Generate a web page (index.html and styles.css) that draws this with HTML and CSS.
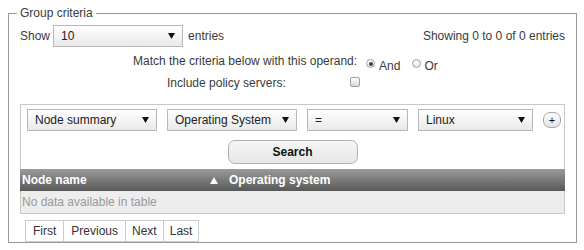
FILE: index.html
```html
<!DOCTYPE html>
<html>
<head>
<meta charset="utf-8">
<link rel="stylesheet" href="styles.css">
</head>
<body>
<fieldset class="group">
  <legend class="group-title">Group criteria</legend>
  <div class="top-row">
    <div class="length">
      <span>Show</span>
      <div class="select select-len"><span>10</span><svg class="arrow" width="7" height="6" viewBox="0 0 7 6"><path d="M0 0H7L3.5 6Z"/></svg></div>
      <span>entries</span>
    </div>
    <div class="info">Showing 0 to 0 of 0 entries</div>
  </div>
  <div class="options">
    <div class="opt-row operand">
      <span class="opt-label">Match the criteria below with this operand:</span>
      <span class="radio checked"></span><span class="radio-text and">And</span>
      <span class="radio second"></span><span class="radio-text or">Or</span>
    </div>
    <div class="opt-row policy">
      <span class="opt-label">Include policy servers:</span>
      <span class="checkbox"></span>
    </div>
  </div>
  <div class="criteria">
    <div class="line">
      <div class="select w130"><span>Node summary</span><svg class="arrow" width="7" height="6" viewBox="0 0 7 6"><path d="M0 0H7L3.5 6Z"/></svg></div>
      <div class="select w130"><span>Operating System</span><svg class="arrow" width="7" height="6" viewBox="0 0 7 6"><path d="M0 0H7L3.5 6Z"/></svg></div>
      <div class="select w101"><span>=</span><svg class="arrow" width="7" height="6" viewBox="0 0 7 6"><path d="M0 0H7L3.5 6Z"/></svg></div>
      <div class="select w115"><span>Linux</span><svg class="arrow" width="7" height="6" viewBox="0 0 7 6"><path d="M0 0H7L3.5 6Z"/></svg></div>
      <div class="plus">+</div>
    </div>
    <div class="search-wrap"><div class="search">Search</div></div>
  </div>
  <div class="table">
    <div class="thead">
      <div class="th">Node name</div>
      <div class="th sorted"><svg class="tri" width="8" height="7" viewBox="0 0 8 7"><path d="M4 0L8 7H0Z"/></svg><span>Operating system</span></div>
    </div>
    <div class="empty">No data available in table</div>
  </div>
  <div class="pager">
    <span class="pg">First</span><span class="pg">Previous</span><span class="pg">Next</span><span class="pg">Last</span>
  </div>
</fieldset>
</body>
</html>
```

FILE: styles.css
```css
html, body {
  margin: 0;
  padding: 0;
  background: #fff;
}
body {
  font-family: "Liberation Sans", Arial, sans-serif;
  font-size: 12px;
  color: #3a3a3a;
}
.group {
  margin: 6px 7px 0 8px;
  padding: 5px 11px 0 11px;
  border: 1px solid #9a9a9a;
  min-width: 0;
}
.group-title {
  margin-left: -3px;
  padding: 0 3px;
  line-height: 14px;
}
.top-row {
  display: flex;
  justify-content: space-between;
  align-items: center;
  height: 22px;
}
.length {
  display: flex;
  align-items: center;
}
.length .select-len {
  margin: 0 5px 0 3px;
  width: 130px;
}
.info {
  text-align: right;
}
.select {
  box-sizing: border-box;
  height: 22px;
  display: flex;
  align-items: center;
  justify-content: space-between;
  border: 1px solid #b8b8b8;
  background: linear-gradient(#ffffff, #e9e9e9);
  padding: 0 7px;
  color: #222;
  white-space: nowrap;
}
.arrow {
  fill: #111;
  flex: none;
}
.w130 { width: 130px; }
.w101 { width: 101px; }
.w115 { width: 115px; }
.options {
  margin-top: 7px;
  padding-left: 113px;
}
.opt-row {
  display: flex;
  align-items: flex-start;
  line-height: 14px;
}
.operand {
  height: 20px;
}
.policy {
  margin-top: 2px;
  padding-left: 34px;
  height: 14px;
}
.radio {
  box-sizing: border-box;
  width: 9px;
  height: 9px;
  border-radius: 50%;
  border: 1px solid #a5a5a5;
  background: radial-gradient(circle at 50% 35%, #ffffff, #dcdcdc);
  margin-top: 5px;
  margin-left: 9px;
  position: relative;
}
.radio.checked::after {
  content: "";
  position: absolute;
  left: 1.5px;
  top: 1.5px;
  width: 4px;
  height: 4px;
  border-radius: 50%;
  background: #444;
}
.radio.second {
  margin-left: 12px;
}
.radio-text {
  margin-top: 5px;
}
.radio-text.and { margin-left: 4px; }
.radio-text.or { margin-left: 3px; }
.checkbox {
  box-sizing: border-box;
  width: 10px;
  height: 10px;
  border: 1px solid #a0a0a0;
  border-radius: 2px;
  background: linear-gradient(#ffffff, #d8d8d8);
  margin-left: 64px;
  margin-top: 1px;
}
.criteria {
  margin-top: 14px;
  border: 1px solid #c8c8c8;
  border-bottom: none;
  padding: 4px 0 5px 6px;
}
.line {
  display: flex;
  align-items: center;
  gap: 10px;
}
.plus {
  box-sizing: border-box;
  width: 18px;
  height: 16px;
  border: 1px solid #a8a8a8;
  border-radius: 7px;
  background: linear-gradient(#ffffff, #e4e4e4);
  display: flex;
  align-items: center;
  justify-content: center;
  font-size: 11px;
  line-height: 1;
  color: #111;
}
.search-wrap {
  display: flex;
  justify-content: center;
  margin-top: 9px;
  margin-left: -6px;
}
.search {
  box-sizing: border-box;
  width: 130px;
  height: 24px;
  border: 1px solid #b0b0b0;
  border-radius: 7px;
  background: linear-gradient(#f6f6f6, #e6e6e6);
  display: flex;
  align-items: center;
  justify-content: center;
  font-weight: bold;
  color: #111;
}
.thead {
  display: grid;
  grid-template-columns: 185px 1fr;
  height: 22px;
  background: linear-gradient(#9b9b9b, #585858);
  color: #fff;
  font-weight: bold;
}
.th {
  display: flex;
  align-items: center;
  padding-left: 2px;
}
.th.sorted {
  padding-left: 5px;
  gap: 11px;
}
.tri {
  fill: #fff;
  flex: none;
}
.empty {
  box-sizing: border-box;
  height: 23px;
  background: #ededed;
  border: 1px solid #c8c8c8;
  border-top: none;
  color: #9a9a9a;
  display: flex;
  align-items: center;
  padding-left: 1px;
}
.pager {
  display: flex;
  margin-top: 6px;
  margin-left: 5px;
}
.pg {
  box-sizing: border-box;
  height: 22px;
  display: flex;
  align-items: center;
  padding: 0 6px;
  border: 1px solid #cccccc;
  margin-left: -1px;
  background: #fff;
  color: #333;
}
.pg:first-child {
  margin-left: 0;
  padding: 0 7px;
}
.pg:nth-child(2) {
  padding: 0 7px;
}
```
